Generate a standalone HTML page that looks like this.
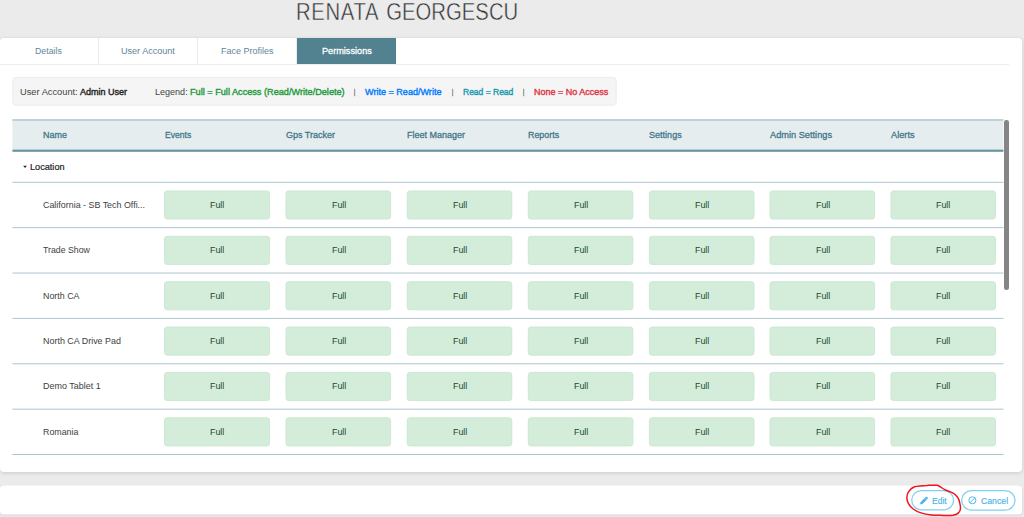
<!DOCTYPE html>
<html><head><meta charset="utf-8">
<style>
*{box-sizing:border-box;margin:0;padding:0}
html,body{width:1024px;height:517px;overflow:hidden;background:#ebebeb;font-family:"Liberation Sans",sans-serif;color:#333}
.t{position:absolute;white-space:pre;line-height:20px;transform-origin:0 50%}
.card{position:absolute;left:0;top:38px;width:1022px;height:434px;background:#fff;border-radius:4px;box-shadow:0 1px 4px rgba(0,0,0,.14)}
.tabline{position:absolute;left:0;top:64px;width:1009px;height:1px;background:#e9edef}
.tsep{position:absolute;top:38px;width:1px;height:26px;background:#e6ecef}
.tabact{position:absolute;left:297px;top:38px;width:99px;height:26px;background:#52828f}
.legend{position:absolute;left:12.5px;top:77px;width:604px;height:28.5px;background:#f5f5f5;border:1px solid #ececec;border-radius:3px}
.thead{position:absolute;left:12.5px;top:119px;width:991px;height:33px;background:#e5edee;border-top:2px solid #c0d1d7;border-bottom:2px solid #6793a2}
.sb{position:absolute;left:1004.3px;top:119.5px;width:4.6px;height:170.3px;background:#858585;border-radius:2.3px}
.foot{position:absolute;left:0;top:486px;width:1022px;height:28px;background:#fff;border-radius:4px;box-shadow:0 1px 3px rgba(0,0,0,.13)}
.btn{position:absolute;top:490px;height:20.8px;border:1px solid #7fd1f2;border-radius:10.4px;background:#fff}
svg{position:absolute;left:0;top:0;overflow:visible}
</style></head><body>
<div class="card"></div>
<div class="tabline"></div>
<div class="tsep" style="left:98px"></div>
<div class="tsep" style="left:197px"></div>
<div class="tsep" style="left:296px"></div>
<div class="tabact"></div>
<div class="sb"></div>
<div class="foot"></div>
<svg width="1024" height="517" viewBox="0 0 1024 517">
<rect x="0" y="485.4" width="1022" height="29.1" rx="4" fill="#fff"/>
<rect x="12.9" y="77.4" width="603.3" height="27.8" rx="3" fill="#f5f5f5" stroke="#e9e9e9" stroke-width="0.8"/>
<rect x="12.4" y="119" width="991" height="2" fill="#c0d1d7"/>
<rect x="12.4" y="121" width="991" height="28.7" fill="#e5edee"/>
<rect x="12.4" y="149.6" width="991" height="2.2" fill="#6793a2"/>
<rect x="12.4" y="181.80" width="991" height="1" fill="#adc5ce"/>
<rect x="12.4" y="227.17" width="991" height="1" fill="#adc5ce"/>
<rect x="12.4" y="272.54" width="991" height="1" fill="#adc5ce"/>
<rect x="12.4" y="317.91" width="991" height="1" fill="#adc5ce"/>
<rect x="12.4" y="363.28" width="991" height="1" fill="#adc5ce"/>
<rect x="12.4" y="408.65" width="991" height="1" fill="#adc5ce"/>
<rect x="12.4" y="454.02" width="991" height="1" fill="#adc5ce"/>
<rect x="164.50" y="190.90" width="105.10" height="28.2" rx="2.6" fill="#d4edda" stroke="#c6e6cd" stroke-width="0.8"/>
<rect x="286.00" y="190.90" width="104.60" height="28.2" rx="2.6" fill="#d4edda" stroke="#c6e6cd" stroke-width="0.8"/>
<rect x="407.20" y="190.90" width="104.60" height="28.2" rx="2.6" fill="#d4edda" stroke="#c6e6cd" stroke-width="0.8"/>
<rect x="528.30" y="190.90" width="104.60" height="28.2" rx="2.6" fill="#d4edda" stroke="#c6e6cd" stroke-width="0.8"/>
<rect x="649.40" y="190.90" width="104.60" height="28.2" rx="2.6" fill="#d4edda" stroke="#c6e6cd" stroke-width="0.8"/>
<rect x="770.00" y="190.90" width="104.60" height="28.2" rx="2.6" fill="#d4edda" stroke="#c6e6cd" stroke-width="0.8"/>
<rect x="890.90" y="190.90" width="104.60" height="28.2" rx="2.6" fill="#d4edda" stroke="#c6e6cd" stroke-width="0.8"/>
<rect x="164.50" y="236.27" width="105.10" height="28.2" rx="2.6" fill="#d4edda" stroke="#c6e6cd" stroke-width="0.8"/>
<rect x="286.00" y="236.27" width="104.60" height="28.2" rx="2.6" fill="#d4edda" stroke="#c6e6cd" stroke-width="0.8"/>
<rect x="407.20" y="236.27" width="104.60" height="28.2" rx="2.6" fill="#d4edda" stroke="#c6e6cd" stroke-width="0.8"/>
<rect x="528.30" y="236.27" width="104.60" height="28.2" rx="2.6" fill="#d4edda" stroke="#c6e6cd" stroke-width="0.8"/>
<rect x="649.40" y="236.27" width="104.60" height="28.2" rx="2.6" fill="#d4edda" stroke="#c6e6cd" stroke-width="0.8"/>
<rect x="770.00" y="236.27" width="104.60" height="28.2" rx="2.6" fill="#d4edda" stroke="#c6e6cd" stroke-width="0.8"/>
<rect x="890.90" y="236.27" width="104.60" height="28.2" rx="2.6" fill="#d4edda" stroke="#c6e6cd" stroke-width="0.8"/>
<rect x="164.50" y="281.64" width="105.10" height="28.2" rx="2.6" fill="#d4edda" stroke="#c6e6cd" stroke-width="0.8"/>
<rect x="286.00" y="281.64" width="104.60" height="28.2" rx="2.6" fill="#d4edda" stroke="#c6e6cd" stroke-width="0.8"/>
<rect x="407.20" y="281.64" width="104.60" height="28.2" rx="2.6" fill="#d4edda" stroke="#c6e6cd" stroke-width="0.8"/>
<rect x="528.30" y="281.64" width="104.60" height="28.2" rx="2.6" fill="#d4edda" stroke="#c6e6cd" stroke-width="0.8"/>
<rect x="649.40" y="281.64" width="104.60" height="28.2" rx="2.6" fill="#d4edda" stroke="#c6e6cd" stroke-width="0.8"/>
<rect x="770.00" y="281.64" width="104.60" height="28.2" rx="2.6" fill="#d4edda" stroke="#c6e6cd" stroke-width="0.8"/>
<rect x="890.90" y="281.64" width="104.60" height="28.2" rx="2.6" fill="#d4edda" stroke="#c6e6cd" stroke-width="0.8"/>
<rect x="164.50" y="327.01" width="105.10" height="28.2" rx="2.6" fill="#d4edda" stroke="#c6e6cd" stroke-width="0.8"/>
<rect x="286.00" y="327.01" width="104.60" height="28.2" rx="2.6" fill="#d4edda" stroke="#c6e6cd" stroke-width="0.8"/>
<rect x="407.20" y="327.01" width="104.60" height="28.2" rx="2.6" fill="#d4edda" stroke="#c6e6cd" stroke-width="0.8"/>
<rect x="528.30" y="327.01" width="104.60" height="28.2" rx="2.6" fill="#d4edda" stroke="#c6e6cd" stroke-width="0.8"/>
<rect x="649.40" y="327.01" width="104.60" height="28.2" rx="2.6" fill="#d4edda" stroke="#c6e6cd" stroke-width="0.8"/>
<rect x="770.00" y="327.01" width="104.60" height="28.2" rx="2.6" fill="#d4edda" stroke="#c6e6cd" stroke-width="0.8"/>
<rect x="890.90" y="327.01" width="104.60" height="28.2" rx="2.6" fill="#d4edda" stroke="#c6e6cd" stroke-width="0.8"/>
<rect x="164.50" y="372.38" width="105.10" height="28.2" rx="2.6" fill="#d4edda" stroke="#c6e6cd" stroke-width="0.8"/>
<rect x="286.00" y="372.38" width="104.60" height="28.2" rx="2.6" fill="#d4edda" stroke="#c6e6cd" stroke-width="0.8"/>
<rect x="407.20" y="372.38" width="104.60" height="28.2" rx="2.6" fill="#d4edda" stroke="#c6e6cd" stroke-width="0.8"/>
<rect x="528.30" y="372.38" width="104.60" height="28.2" rx="2.6" fill="#d4edda" stroke="#c6e6cd" stroke-width="0.8"/>
<rect x="649.40" y="372.38" width="104.60" height="28.2" rx="2.6" fill="#d4edda" stroke="#c6e6cd" stroke-width="0.8"/>
<rect x="770.00" y="372.38" width="104.60" height="28.2" rx="2.6" fill="#d4edda" stroke="#c6e6cd" stroke-width="0.8"/>
<rect x="890.90" y="372.38" width="104.60" height="28.2" rx="2.6" fill="#d4edda" stroke="#c6e6cd" stroke-width="0.8"/>
<rect x="164.50" y="417.75" width="105.10" height="28.2" rx="2.6" fill="#d4edda" stroke="#c6e6cd" stroke-width="0.8"/>
<rect x="286.00" y="417.75" width="104.60" height="28.2" rx="2.6" fill="#d4edda" stroke="#c6e6cd" stroke-width="0.8"/>
<rect x="407.20" y="417.75" width="104.60" height="28.2" rx="2.6" fill="#d4edda" stroke="#c6e6cd" stroke-width="0.8"/>
<rect x="528.30" y="417.75" width="104.60" height="28.2" rx="2.6" fill="#d4edda" stroke="#c6e6cd" stroke-width="0.8"/>
<rect x="649.40" y="417.75" width="104.60" height="28.2" rx="2.6" fill="#d4edda" stroke="#c6e6cd" stroke-width="0.8"/>
<rect x="770.00" y="417.75" width="104.60" height="28.2" rx="2.6" fill="#d4edda" stroke="#c6e6cd" stroke-width="0.8"/>
<rect x="890.90" y="417.75" width="104.60" height="28.2" rx="2.6" fill="#d4edda" stroke="#c6e6cd" stroke-width="0.8"/>
<path d="M23.2 165.7 L26.9 165.7 L25.05 168 Z" fill="#222"/>
<rect x="911.75" y="490.55" width="41.8" height="19.3" rx="9.65" fill="#fff" stroke="#7fd1f2" stroke-width="1.3"/>
<rect x="961.65" y="490.55" width="53.4" height="19.6" rx="9.8" fill="#fff" stroke="#7fd1f2" stroke-width="1.3"/>
<g fill="#46b4e8"><path d="M920 504 L920.5 501.9 L925 497.4 L926.7 499.1 L922.2 503.6 Z M925.6 496.8 L926.3 496.1 Q926.7 495.8 927.1 496.1 L928 497 Q928.3 497.4 928 497.8 L927.3 498.5 Z" transform="translate(924,500.7) scale(0.88) translate(-924,-500.2)" stroke="#46b4e8" stroke-width="0.8" stroke-linejoin="round"/></g>
<circle cx="972.4" cy="500.3" r="3.5" fill="none" stroke="#52b9ea" stroke-width="1"/>
<path d="M969.9 502.8 L974.9 497.8" stroke="#52b9ea" stroke-width="1"/>
<path d="M914.4 486.8 C918 485.8 923 485.5 927.3 485.4 C931 485.2 934 485 937.4 485.2 C939 485.8 940 486.6 941.3 487.5 C942.8 488.6 944.3 489.5 946 490.3 C948 491.2 950.3 491.7 952.3 492.6 C954.5 493.8 956.5 495.3 957.7 497.3 C958.8 499 959.4 500.9 959.7 502.8 C960.1 504.6 960.6 506.5 960.5 508.3 C960.4 510 959.8 511.8 958.5 512.9 C957 514.3 955 515 953 515.3 C949.7 515.7 946.2 515.5 942.9 515.4 C939 515.3 935 515.3 931.2 514.9 C927.7 514.6 924.2 514 921 512.9 C918.2 512 915.4 510.8 913.2 509 C911.2 507.5 909.6 505.7 908.5 503.6 C907.6 501.9 907 500 906.9 498.1 C906.8 495.9 907.3 493.6 908.5 491.8 C909.9 489.6 912 487.8 914.4 486.8 Z" fill="none" stroke="#f4121b" stroke-width="1.5" stroke-linejoin="round"/>
</svg>
<span class="t" style="left:295.63px;top:1.93px;font-size:23.3px;color:#333;-webkit-text-stroke:0.45px #ebebeb;word-spacing:1.5px;transform:scaleX(0.8715)"><span style="letter-spacing:.75px">RENATA</span> GEORGESCU</span>
<span class="t" style="left:35.00px;top:40.62px;font-size:9.6px;color:#5f8798;transform:scaleX(0.9167)">Details</span>
<span class="t" style="left:120.75px;top:40.62px;font-size:9.6px;color:#5f8798;transform:scaleX(0.9440)">User Account</span>
<span class="t" style="left:221.00px;top:40.62px;font-size:9.6px;color:#5f8798;transform:scaleX(0.9375)">Face Profiles</span>
<span class="t" style="left:321.50px;top:40.62px;font-size:9.6px;color:#fff;-webkit-text-stroke:0.3px #fff;transform:scaleX(0.9528)">Permissions</span>
<span class="t" style="left:20.00px;top:81.77px;font-size:9.6px;color:#444;transform:scaleX(0.9661)">User Account:</span>
<span class="t" style="left:79.50px;top:81.77px;font-size:9.6px;color:#222;-webkit-text-stroke:0.4px #222;transform:scaleX(0.9400)">Admin User</span>
<span class="t" style="left:154.50px;top:81.77px;font-size:9.6px;color:#444;transform:scaleX(0.9412)">Legend:</span>
<span class="t" style="left:189.50px;top:81.77px;font-size:9.6px;color:#239a3e;-webkit-text-stroke:0.4px #239a3e;transform:scaleX(0.9537)">Full = Full Access (Read/Write/Delete)</span>
<span class="t" style="left:353.80px;top:81.50px;font-size:7.8px;color:#7a3f5c;-webkit-text-stroke:0.35px #7a3f5c;transform:scaleX(0.6000)">|</span>
<span class="t" style="left:365.00px;top:81.77px;font-size:9.6px;color:#007bff;-webkit-text-stroke:0.4px #007bff;transform:scaleX(0.9444)">Write = Read/Write</span>
<span class="t" style="left:451.50px;top:81.50px;font-size:7.8px;color:#7a3f5c;-webkit-text-stroke:0.35px #7a3f5c;transform:scaleX(0.6000)">|</span>
<span class="t" style="left:462.50px;top:81.77px;font-size:9.6px;color:#1599ae;-webkit-text-stroke:0.4px #1599ae;transform:scaleX(0.8860)">Read = Read</span>
<span class="t" style="left:522.70px;top:81.50px;font-size:7.8px;color:#555;-webkit-text-stroke:0.35px #555;transform:scaleX(0.6000)">|</span>
<span class="t" style="left:534.00px;top:81.77px;font-size:9.6px;color:#dc3545;-webkit-text-stroke:0.4px #dc3545;transform:scaleX(0.9375)">None = No Access</span>
<span class="t" style="left:42.80px;top:124.67px;font-size:9.6px;color:#42768a;-webkit-text-stroke:0.3px #42768a;transform:scaleX(0.9346)">Name</span>
<span class="t" style="left:164.50px;top:124.67px;font-size:9.6px;color:#42768a;-webkit-text-stroke:0.3px #42768a;transform:scaleX(0.8933)">Events</span>
<span class="t" style="left:286.00px;top:124.67px;font-size:9.6px;color:#42768a;-webkit-text-stroke:0.3px #42768a;transform:scaleX(0.9375)">Gps Tracker</span>
<span class="t" style="left:407.00px;top:124.67px;font-size:9.6px;color:#42768a;-webkit-text-stroke:0.3px #42768a;transform:scaleX(0.9355)">Fleet Manager</span>
<span class="t" style="left:528.00px;top:124.67px;font-size:9.6px;color:#42768a;-webkit-text-stroke:0.3px #42768a;transform:scaleX(0.9265)">Reports</span>
<span class="t" style="left:649.00px;top:124.67px;font-size:9.6px;color:#42768a;-webkit-text-stroke:0.3px #42768a;transform:scaleX(0.9429)">Settings</span>
<span class="t" style="left:769.50px;top:124.67px;font-size:9.6px;color:#42768a;-webkit-text-stroke:0.3px #42768a;transform:scaleX(0.9615)">Admin Settings</span>
<span class="t" style="left:890.50px;top:124.67px;font-size:9.6px;color:#42768a;-webkit-text-stroke:0.3px #42768a;transform:scaleX(0.9600)">Alerts</span>
<span class="t" style="left:29.75px;top:156.67px;font-size:9.6px;color:#222;-webkit-text-stroke:0.2px #222;transform:scaleX(0.9527)">Location</span>
<span class="t" style="left:43.00px;top:195.07px;font-size:9.6px;color:#3e3e3e;transform:scaleX(0.9273)">California - SB Tech Offi...</span>
<span class="t" style="left:210.00px;top:195.07px;font-size:9.6px;color:#24492f;transform:scaleX(0.9250)">Full</span>
<span class="t" style="left:331.50px;top:195.07px;font-size:9.6px;color:#24492f;transform:scaleX(0.9250)">Full</span>
<span class="t" style="left:452.70px;top:195.07px;font-size:9.6px;color:#24492f;transform:scaleX(0.9250)">Full</span>
<span class="t" style="left:573.80px;top:195.07px;font-size:9.6px;color:#24492f;transform:scaleX(0.9250)">Full</span>
<span class="t" style="left:694.90px;top:195.07px;font-size:9.6px;color:#24492f;transform:scaleX(0.9250)">Full</span>
<span class="t" style="left:815.50px;top:195.07px;font-size:9.6px;color:#24492f;transform:scaleX(0.9250)">Full</span>
<span class="t" style="left:936.40px;top:195.07px;font-size:9.6px;color:#24492f;transform:scaleX(0.9250)">Full</span>
<span class="t" style="left:43.00px;top:240.27px;font-size:9.6px;color:#3e3e3e;transform:scaleX(0.9135)">Trade Show</span>
<span class="t" style="left:210.00px;top:240.27px;font-size:9.6px;color:#24492f;transform:scaleX(0.9250)">Full</span>
<span class="t" style="left:331.50px;top:240.27px;font-size:9.6px;color:#24492f;transform:scaleX(0.9250)">Full</span>
<span class="t" style="left:452.70px;top:240.27px;font-size:9.6px;color:#24492f;transform:scaleX(0.9250)">Full</span>
<span class="t" style="left:573.80px;top:240.27px;font-size:9.6px;color:#24492f;transform:scaleX(0.9250)">Full</span>
<span class="t" style="left:694.90px;top:240.27px;font-size:9.6px;color:#24492f;transform:scaleX(0.9250)">Full</span>
<span class="t" style="left:815.50px;top:240.27px;font-size:9.6px;color:#24492f;transform:scaleX(0.9250)">Full</span>
<span class="t" style="left:936.40px;top:240.27px;font-size:9.6px;color:#24492f;transform:scaleX(0.9250)">Full</span>
<span class="t" style="left:43.00px;top:285.67px;font-size:9.6px;color:#3e3e3e;transform:scaleX(0.9250)">North CA</span>
<span class="t" style="left:210.00px;top:285.67px;font-size:9.6px;color:#24492f;transform:scaleX(0.9250)">Full</span>
<span class="t" style="left:331.50px;top:285.67px;font-size:9.6px;color:#24492f;transform:scaleX(0.9250)">Full</span>
<span class="t" style="left:452.70px;top:285.67px;font-size:9.6px;color:#24492f;transform:scaleX(0.9250)">Full</span>
<span class="t" style="left:573.80px;top:285.67px;font-size:9.6px;color:#24492f;transform:scaleX(0.9250)">Full</span>
<span class="t" style="left:694.90px;top:285.67px;font-size:9.6px;color:#24492f;transform:scaleX(0.9250)">Full</span>
<span class="t" style="left:815.50px;top:285.67px;font-size:9.6px;color:#24492f;transform:scaleX(0.9250)">Full</span>
<span class="t" style="left:936.40px;top:285.67px;font-size:9.6px;color:#24492f;transform:scaleX(0.9250)">Full</span>
<span class="t" style="left:43.00px;top:331.07px;font-size:9.6px;color:#3e3e3e;transform:scaleX(0.9315)">North CA Drive Pad</span>
<span class="t" style="left:210.00px;top:331.07px;font-size:9.6px;color:#24492f;transform:scaleX(0.9250)">Full</span>
<span class="t" style="left:331.50px;top:331.07px;font-size:9.6px;color:#24492f;transform:scaleX(0.9250)">Full</span>
<span class="t" style="left:452.70px;top:331.07px;font-size:9.6px;color:#24492f;transform:scaleX(0.9250)">Full</span>
<span class="t" style="left:573.80px;top:331.07px;font-size:9.6px;color:#24492f;transform:scaleX(0.9250)">Full</span>
<span class="t" style="left:694.90px;top:331.07px;font-size:9.6px;color:#24492f;transform:scaleX(0.9250)">Full</span>
<span class="t" style="left:815.50px;top:331.07px;font-size:9.6px;color:#24492f;transform:scaleX(0.9250)">Full</span>
<span class="t" style="left:936.40px;top:331.07px;font-size:9.6px;color:#24492f;transform:scaleX(0.9250)">Full</span>
<span class="t" style="left:43.00px;top:376.17px;font-size:9.6px;color:#3e3e3e;transform:scaleX(0.9355)">Demo Tablet 1</span>
<span class="t" style="left:210.00px;top:376.17px;font-size:9.6px;color:#24492f;transform:scaleX(0.9250)">Full</span>
<span class="t" style="left:331.50px;top:376.17px;font-size:9.6px;color:#24492f;transform:scaleX(0.9250)">Full</span>
<span class="t" style="left:452.70px;top:376.17px;font-size:9.6px;color:#24492f;transform:scaleX(0.9250)">Full</span>
<span class="t" style="left:573.80px;top:376.17px;font-size:9.6px;color:#24492f;transform:scaleX(0.9250)">Full</span>
<span class="t" style="left:694.90px;top:376.17px;font-size:9.6px;color:#24492f;transform:scaleX(0.9250)">Full</span>
<span class="t" style="left:815.50px;top:376.17px;font-size:9.6px;color:#24492f;transform:scaleX(0.9250)">Full</span>
<span class="t" style="left:936.40px;top:376.17px;font-size:9.6px;color:#24492f;transform:scaleX(0.9250)">Full</span>
<span class="t" style="left:43.00px;top:421.67px;font-size:9.6px;color:#3e3e3e;transform:scaleX(0.9231)">Romania</span>
<span class="t" style="left:210.00px;top:421.67px;font-size:9.6px;color:#24492f;transform:scaleX(0.9250)">Full</span>
<span class="t" style="left:331.50px;top:421.67px;font-size:9.6px;color:#24492f;transform:scaleX(0.9250)">Full</span>
<span class="t" style="left:452.70px;top:421.67px;font-size:9.6px;color:#24492f;transform:scaleX(0.9250)">Full</span>
<span class="t" style="left:573.80px;top:421.67px;font-size:9.6px;color:#24492f;transform:scaleX(0.9250)">Full</span>
<span class="t" style="left:694.90px;top:421.67px;font-size:9.6px;color:#24492f;transform:scaleX(0.9250)">Full</span>
<span class="t" style="left:815.50px;top:421.67px;font-size:9.6px;color:#24492f;transform:scaleX(0.9250)">Full</span>
<span class="t" style="left:936.40px;top:421.67px;font-size:9.6px;color:#24492f;transform:scaleX(0.9250)">Full</span>
<span class="t" style="left:931.90px;top:490.97px;font-size:9.6px;color:#46b4e8;-webkit-text-stroke:0.15px #46b4e8;transform:scaleX(0.8882)">Edit</span>
<span class="t" style="left:980.80px;top:490.97px;font-size:9.6px;color:#46b4e8;-webkit-text-stroke:0.15px #46b4e8;transform:scaleX(0.9067)">Cancel</span>
</body></html>
